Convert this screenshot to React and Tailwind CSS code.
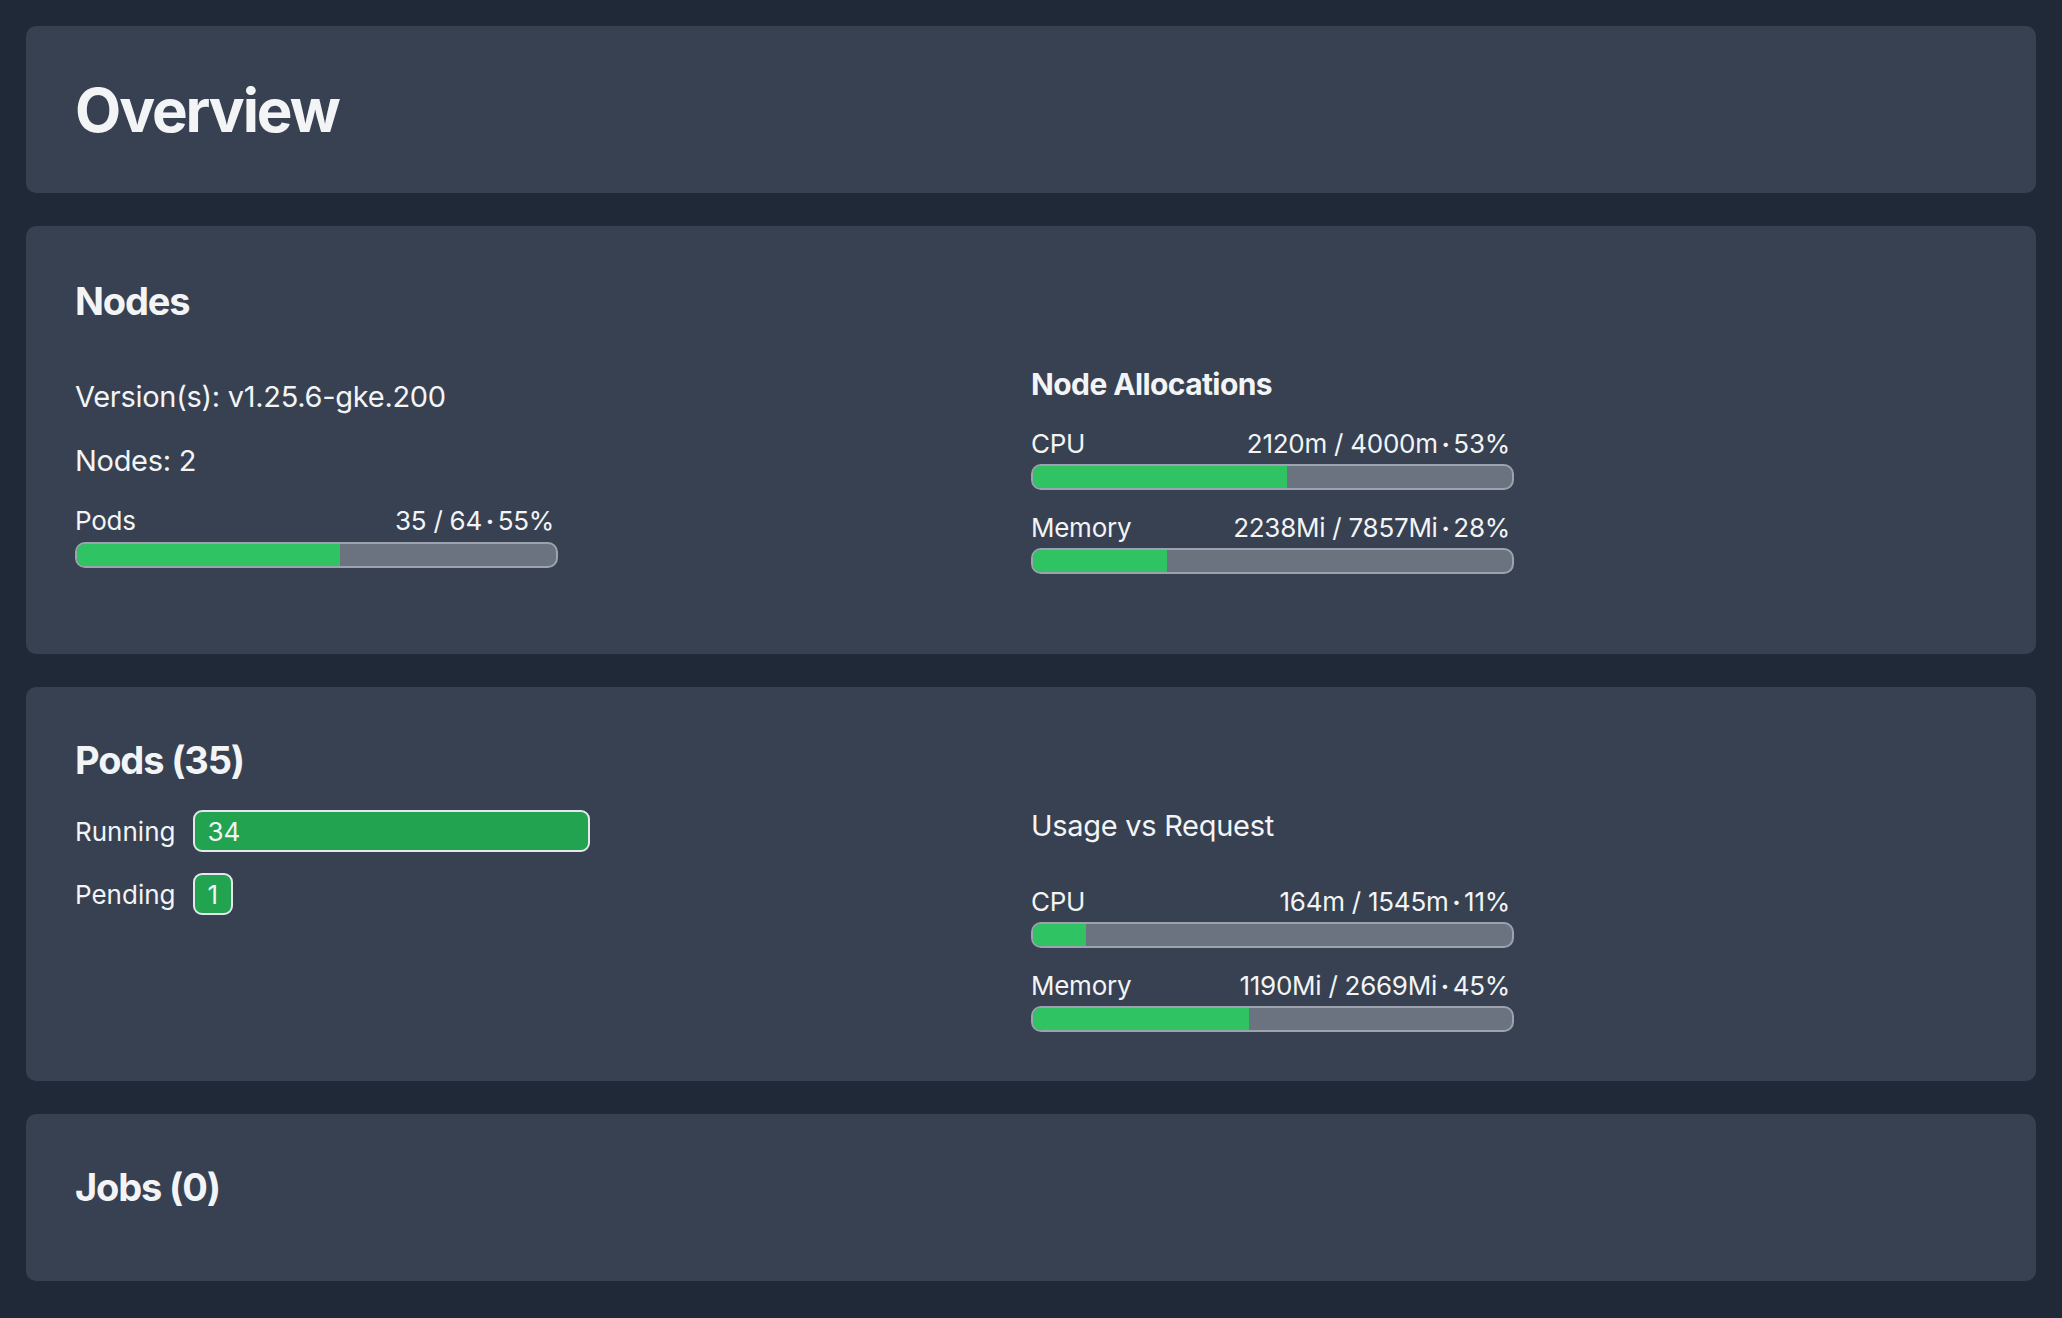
import React from "react";

const font = { fontFamily: "Inter, 'Noto Sans', sans-serif" };

function Bar({ label, used, total, pct, className = "" }) {
  return (
    <div className={`w-[483px] ${className}`}>
      <div className="flex h-[34px] items-center justify-between pr-[4px] text-[26px] tracking-[-0.01em] text-gray-100">
        <span>{label}</span>
        <span className="flex items-center">
          {used} / {total}
          <span className="mx-[4px] text-[14px]">•</span>
          {pct}%
        </span>
      </div>
      <div className="mt-[4px] h-[26px] w-[483px] overflow-hidden rounded-[10px] border-2 border-[#9ca3af] bg-[#6b7280]">
        <div className="h-full bg-[#2fc363]" style={{ width: `${pct}%` }} />
      </div>
    </div>
  );
}

function Card({ children, className = "" }) {
  return <section className={`rounded-[10px] bg-[#374151] px-[49px] ${className}`}>{children}</section>;
}

function Badge({ value, width }) {
  return (
    <div
      className="flex h-[42px] items-center rounded-[9px] border-2 border-gray-200 bg-[#22a350] px-[13px] text-[26px] text-gray-100"
      style={width ? { width } : undefined}
    >
      {value}
    </div>
  );
}

export default function App() {
  return (
    <div className="min-h-screen bg-[#1f2937] p-[26px] text-gray-100" style={font}>
      <div className="flex flex-col gap-[33px]">
        <Card className="flex h-[167px] items-center">
          <h1 className="text-[60px] font-bold leading-none tracking-[-0.035em]">Overview</h1>
        </Card>

        <Card className="pt-[52px] pb-[80px]">
          <h2 className="h-[47px] text-[38px] font-bold leading-[47px] tracking-[-0.03em]">Nodes</h2>
          <div className="mt-[45px] grid grid-cols-2 items-center">
            <div>
              <div className="flex h-[40px] items-center text-[29px] tracking-[-0.01em]">Version(s): v1.25.6-gke.200</div>
              <div className="mt-[24px] flex h-[40px] items-center text-[29px] tracking-[-0.01em]">Nodes: 2</div>
              <Bar label="Pods" used="35" total="64" pct={55} className="mt-[23px]" />
            </div>
            <div className="-mt-[6px]">
              <div className="flex h-[40px] items-center text-[30px] font-bold tracking-[-0.02em]">Node Allocations</div>
              <Bar label="CPU" used="2120m" total="4000m" pct={53} className="mt-[22px]" />
              <Bar label="Memory" used="2238Mi" total="7857Mi" pct={28} className="mt-[20px]" />
            </div>
          </div>
        </Card>

        <Card className="pt-[50px] pb-[49px]">
          <h2 className="h-[47px] text-[38px] font-bold leading-[47px] tracking-[-0.03em]">Pods (35)</h2>
          <div className="mt-[22px] grid grid-cols-2 items-start">
            <div className="mt-[4px] grid grid-cols-[auto_1fr] items-center gap-x-[17px] gap-y-[21px] text-[26px]">
              <span>Running</span>
              <Badge value="34" width="397px" />
              <span>Pending</span>
              <div className="flex">
                <Badge value="1" />
              </div>
            </div>
            <div>
              <div className="flex h-[40px] items-center text-[29px] tracking-[-0.01em]">Usage vs Request</div>
              <Bar label="CPU" used="164m" total="1545m" pct={11} className="mt-[38px]" />
              <Bar label="Memory" used="1190Mi" total="2669Mi" pct={45} className="mt-[20px]" />
            </div>
          </div>
        </Card>

        <Card className="pt-[50px] pb-[70px]">
          <h2 className="h-[47px] text-[38px] font-bold leading-[47px] tracking-[-0.03em]">Jobs (0)</h2>
        </Card>
      </div>
    </div>
  );
}
